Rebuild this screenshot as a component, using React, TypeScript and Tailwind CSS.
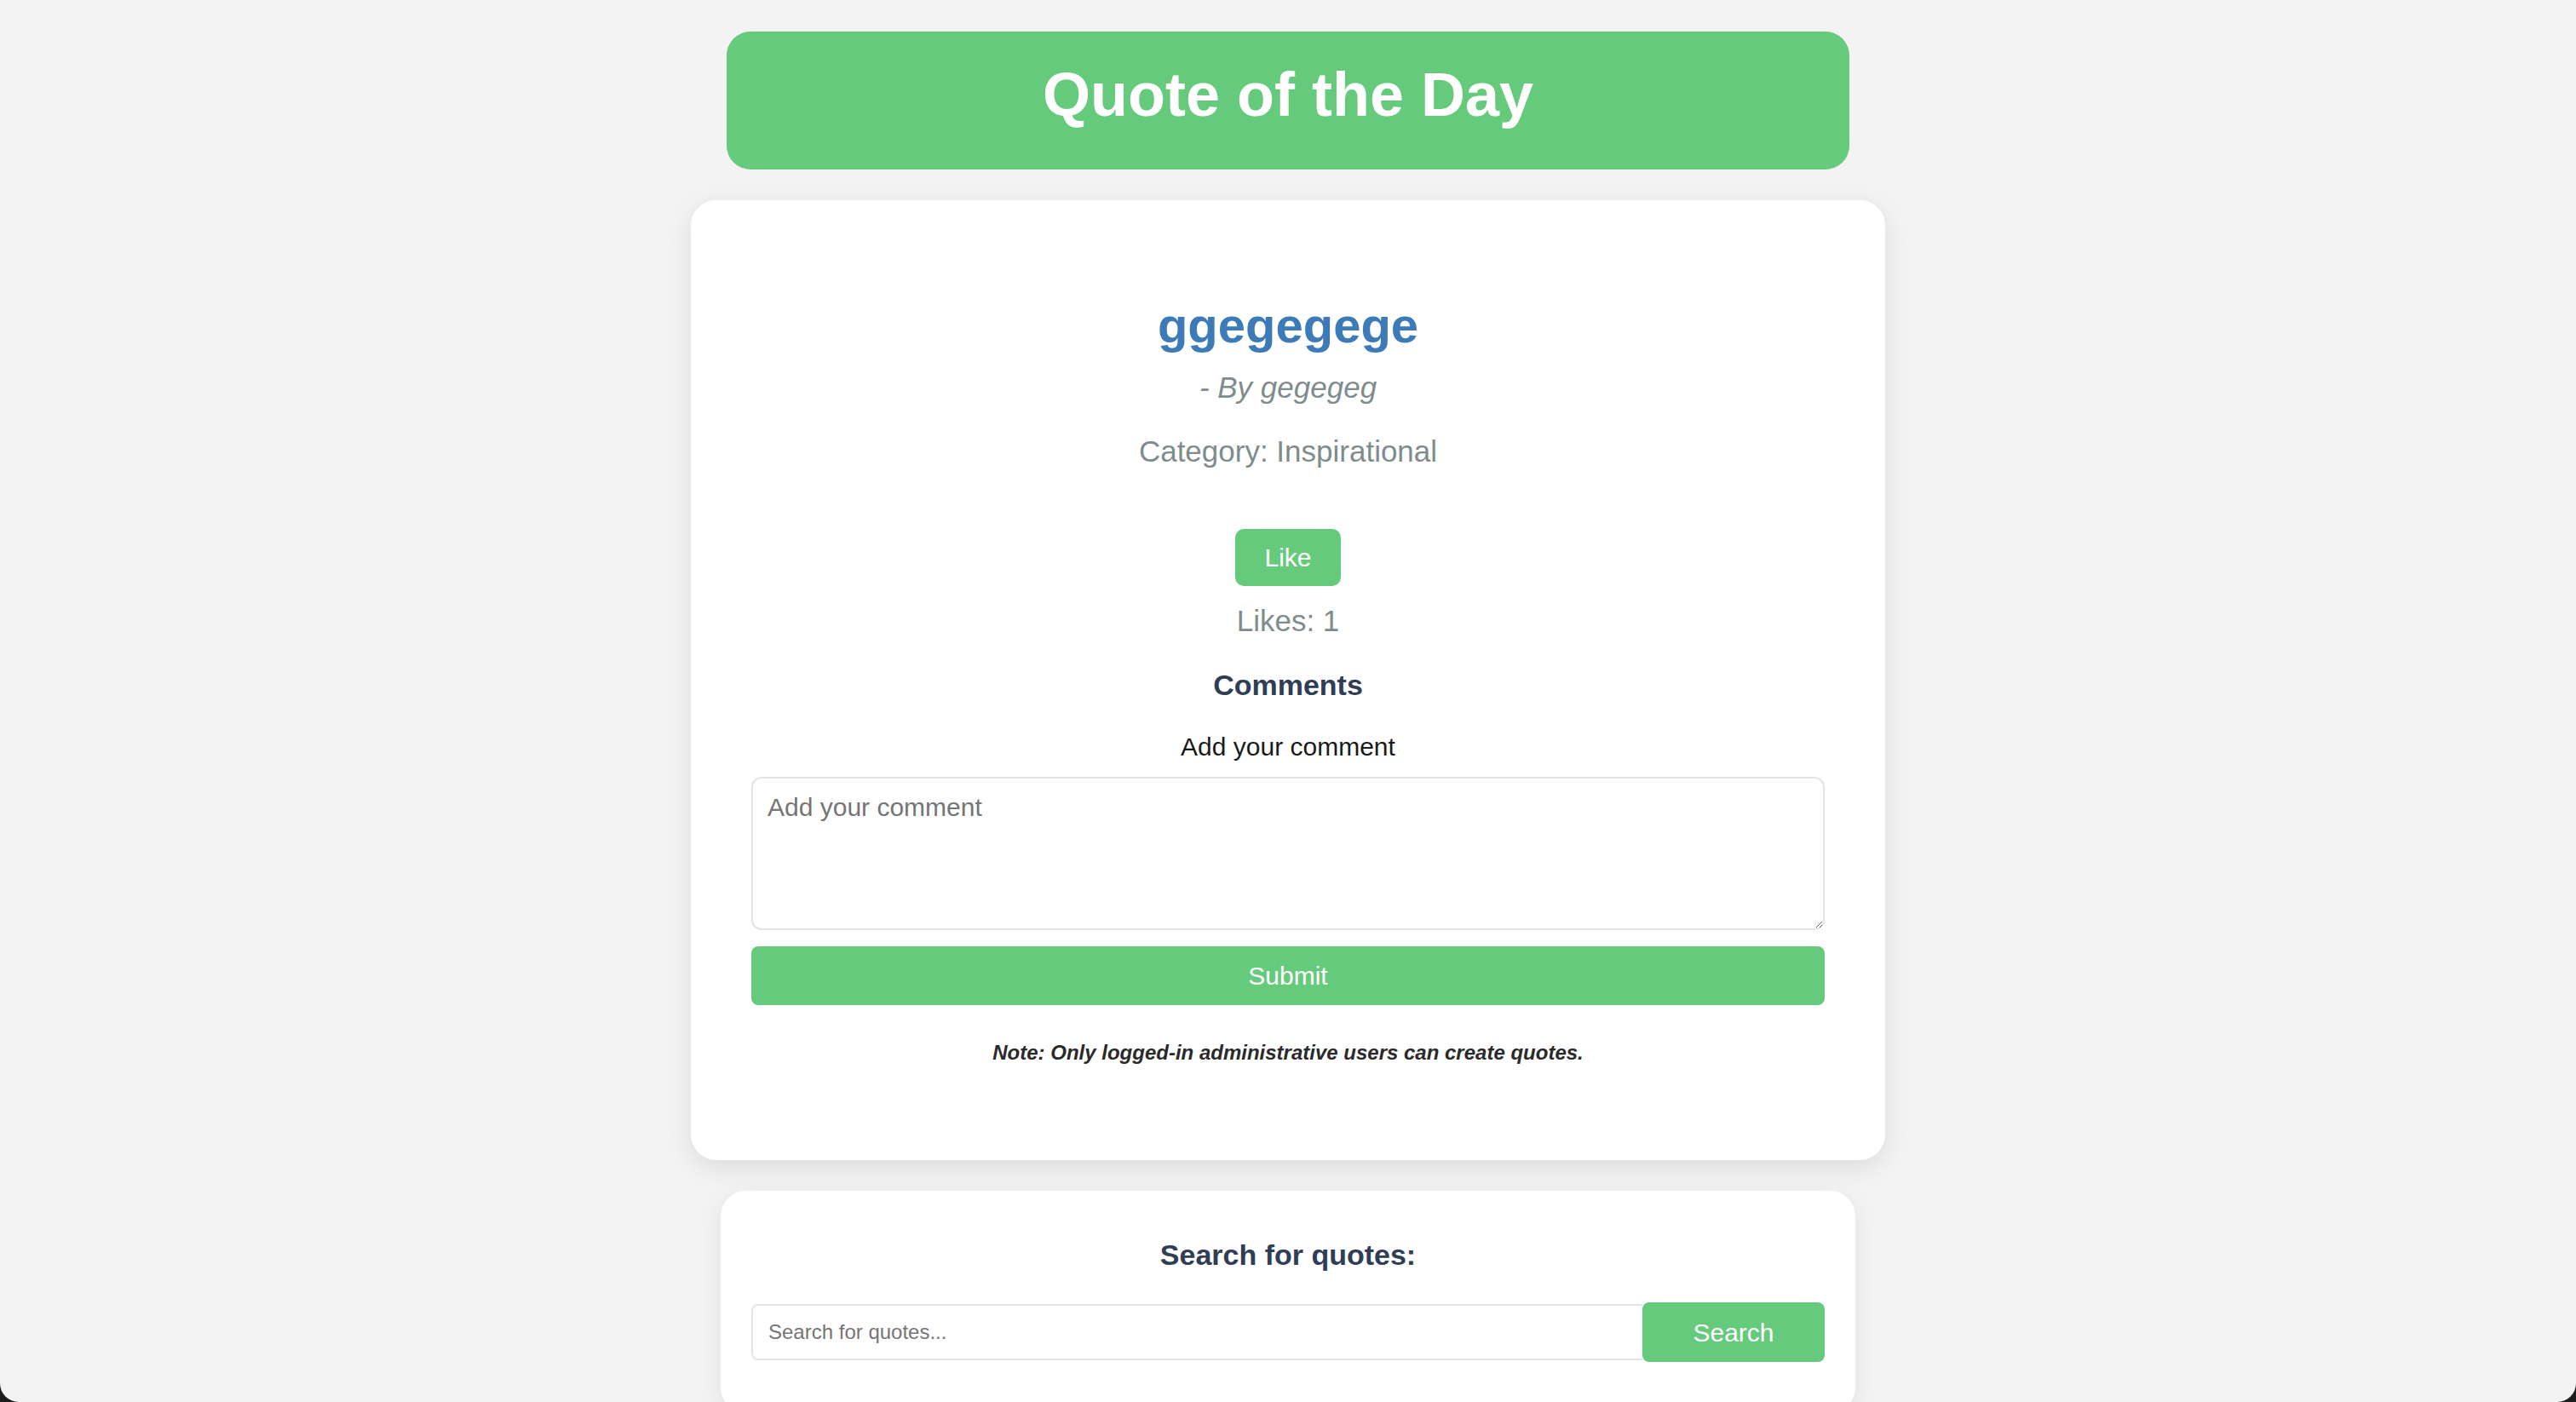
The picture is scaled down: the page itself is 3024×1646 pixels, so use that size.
import React from "react";

export default function App() {
  const font = { fontFamily: '"Liberation Sans", Arial, Helvetica, sans-serif' };
  return (
    <div className="h-screen w-full bg-[#1c1c1c]" style={font}>
      <div className="h-full w-full bg-[#f3f3f3] rounded-b-[22px] overflow-hidden flex flex-col items-center">
        <div className="mt-[37px] w-[1318px] h-[162px] shrink-0 rounded-[28px] bg-[#66ca7c] flex items-center justify-center pb-[14px]">
          <h1 className="text-white font-bold text-[72px] leading-none">Quote of the Day</h1>
        </div>

        <div className="mt-[36px] w-[1402px] shrink-0 rounded-[30px] bg-white shadow-[0_8px_30px_rgba(0,0,0,0.10)] pt-[113px] pb-[111px] px-[71px] flex flex-col items-center text-center">
          <h2 className="text-[58px] leading-[68px] font-bold text-[#3d7ab8]">ggegegege</h2>
          <p className="mt-[18px] text-[35px] leading-[42px] italic text-[#7f8c8d]">- By gegegeg</p>
          <p className="mt-[33px] text-[35px] leading-[42px] text-[#7f8c8d]">Category: Inspirational</p>
          <button className="mt-[70px] w-[124px] h-[67px] rounded-[10px] bg-[#66ca7c] text-white text-[30px]">Like</button>
          <p className="mt-[20px] text-[35px] leading-[42px] text-[#7f8c8d]">Likes: 1</p>
          <h3 className="mt-[34px] text-[34px] leading-[40px] font-bold text-[#2f3e55]">Comments</h3>
          <label className="mt-[35px] text-[30px] leading-[36px] text-[#1a1a1a]">Add your comment</label>
          <textarea
            placeholder="Add your comment"
            className="mt-[17px] w-full h-[180px] rounded-[12px] border-2 border-[#e4e4e4] px-[17px] py-[16px] text-[30px] leading-[36px] placeholder:text-[#757575] outline-none"
            style={font}
          />
          <button className="mt-[19px] w-full h-[69px] rounded-[8px] bg-[#66ca7c] text-white text-[30px]">Submit</button>
          <p className="mt-[41px] text-[24px] leading-[30px] font-bold italic text-[#2a2a2a]">
            Note: Only logged-in administrative users can create quotes.
          </p>
        </div>

        <div className="mt-[36px] w-[1332px] shrink-0 rounded-[30px] bg-white shadow-[0_8px_30px_rgba(0,0,0,0.08)] pt-[55px] pb-[60px] px-[36px] flex flex-col items-center">
          <h3 className="text-[34px] leading-[40px] font-bold text-[#2f3e55]">Search for quotes:</h3>
          <div className="mt-[36px] w-full flex items-center">
            <input
              placeholder="Search for quotes..."
              className="flex-1 h-[66px] rounded-l-[8px] border-2 border-r-0 border-[#e4e4e4] px-[18px] text-[24px] placeholder:text-[#757575] outline-none"
              style={font}
            />
            <button className="w-[214px] h-[70px] rounded-[8px] bg-[#66ca7c] text-white text-[30px]">Search</button>
          </div>
        </div>
      </div>
    </div>
  );
}
